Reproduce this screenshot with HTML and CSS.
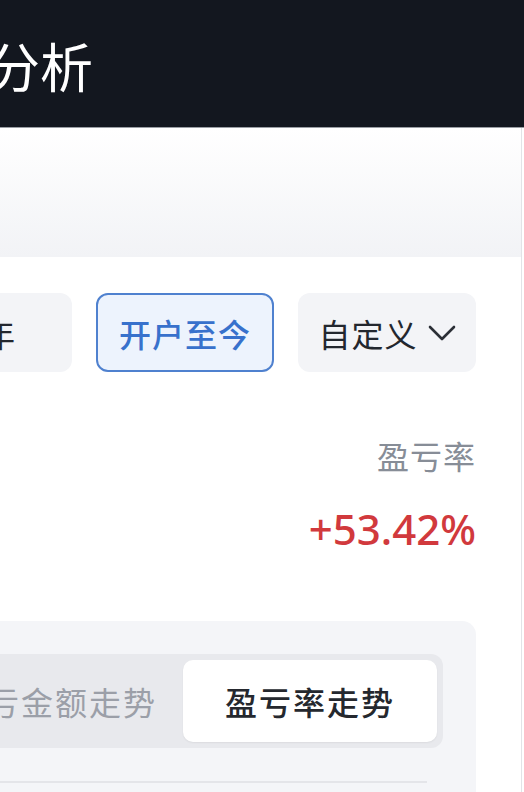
FILE: index.html
```html
<!DOCTYPE html>
<html lang="zh-CN">
<head>
<meta charset="utf-8">
<title>分析</title>
<link rel="stylesheet" href="styles.css">
</head>
<body>
<header class="header">
  <h1 class="title">分析</h1>
</header>
<main class="main">
  <div class="hero"></div>
  <div class="content">
    <div class="chips">
      <button class="chip chip-cut">年</button>
      <button class="chip chip-active">开户至今</button>
      <button class="chip">自定义
        <svg class="chev" width="28" height="18" viewBox="0 0 28 18"><polyline points="2,3 14,15 26,3" fill="none" stroke="#2b2f36" stroke-width="2.6" stroke-linecap="round" stroke-linejoin="round"/></svg>
      </button>
    </div>
    <div class="stat">
      <div class="stat-label">盈亏率</div>
      <div class="stat-value">+53.42%</div>
    </div>
    <section class="card">
      <div class="seg">
        <div class="seg-tab seg-cut">亏金额走势</div>
        <div class="seg-tab seg-active">盈亏率走势</div>
      </div>
      <div class="chart-line"></div>
    </section>
  </div>
</main>
</body>
</html>
```
FILE: styles.css
```css
* { box-sizing: border-box; }
html, body { margin: 0; padding: 0; }
body {
  width: 524px;
  height: 792px;
  overflow: hidden;
  background: #ffffff;
  font-family: "Noto Sans", "Noto Sans CJK SC", sans-serif;
}
.header {
  height: 128px;
  background: #13171f;
  border-bottom: 1px solid #9a9ea4;
  display: flex;
  align-items: center;
}
.title {
  margin: 0 0 0 -13px;
  padding-top: 4px;
  font-family: "Noto Sans CJK SC", sans-serif;
  font-weight: 400;
  font-size: 53px;
  line-height: 53px;
  color: #ffffff;
}
.main {
  width: 522px;
  height: 664px;
  border-right: 1px solid #e2e3e7;
  overflow: hidden;
}
.hero {
  height: 129px;
  background: linear-gradient(180deg, #ffffff 0%, #f2f3f6 100%);
}
.content {
  margin-left: -110px;
  width: 586px;
}
.chips {
  margin-top: 36px;
  display: flex;
  justify-content: flex-end;
  gap: 24px;
}
.chip {
  flex: 0 0 178px;
  height: 79px;
  border: 2px solid transparent;
  border-radius: 12px;
  background: #f3f4f7;
  color: #23272e;
  font-family: "Noto Sans CJK SC", sans-serif;
  font-weight: 400;
  font-size: 32px;
  letter-spacing: 1px;
  display: flex;
  align-items: center;
  justify-content: center;
  gap: 10px;
  padding: 0;
}
.chip-cut {
  justify-content: flex-end;
  padding-right: 54px;
}
.chip-active {
  background: #edf3fd;
  border-color: #4f81cf;
  color: #3871cc;
  font-weight: 500;
}
.chev { display: block; }
.stat {
  display: flex;
  flex-direction: column;
  align-items: flex-end;
}
.stat-label {
  margin-top: 61px;
  font-family: "Noto Sans CJK SC", sans-serif;
  font-size: 32px;
  line-height: 44px;
  color: #878d97;
  letter-spacing: 1px;
}
.stat-value {
  margin-top: 27px;
  font-size: 42px;
  font-weight: 500;
  line-height: 50px;
  color: #d1393d;
}
.card {
  margin-top: 67px;
  background: #f4f5f8;
  border-radius: 14px;
  padding: 33px;
  height: 220px;
}
.seg {
  background: #e8e9ed;
  border-radius: 12px;
  padding: 6px;
  display: grid;
  grid-template-columns: 254px 254px;
}
.seg-tab {
  height: 82px;
  display: flex;
  align-items: center;
  justify-content: center;
  font-family: "Noto Sans CJK SC", sans-serif;
  font-size: 32px;
  letter-spacing: 2px;
  color: #9b9fa8;
  border-radius: 10px;
}
.seg-cut {
  justify-content: flex-end;
  padding-right: 26px;
}
.seg-active {
  background: #ffffff;
  color: #25282e;
  font-weight: 500;
  box-shadow: 0 1px 2px rgba(0,0,0,0.06);
}
.chart-line {
  margin: 33px 16px 0 0;
  height: 2px;
  background: #e4e5e9;
}
```
